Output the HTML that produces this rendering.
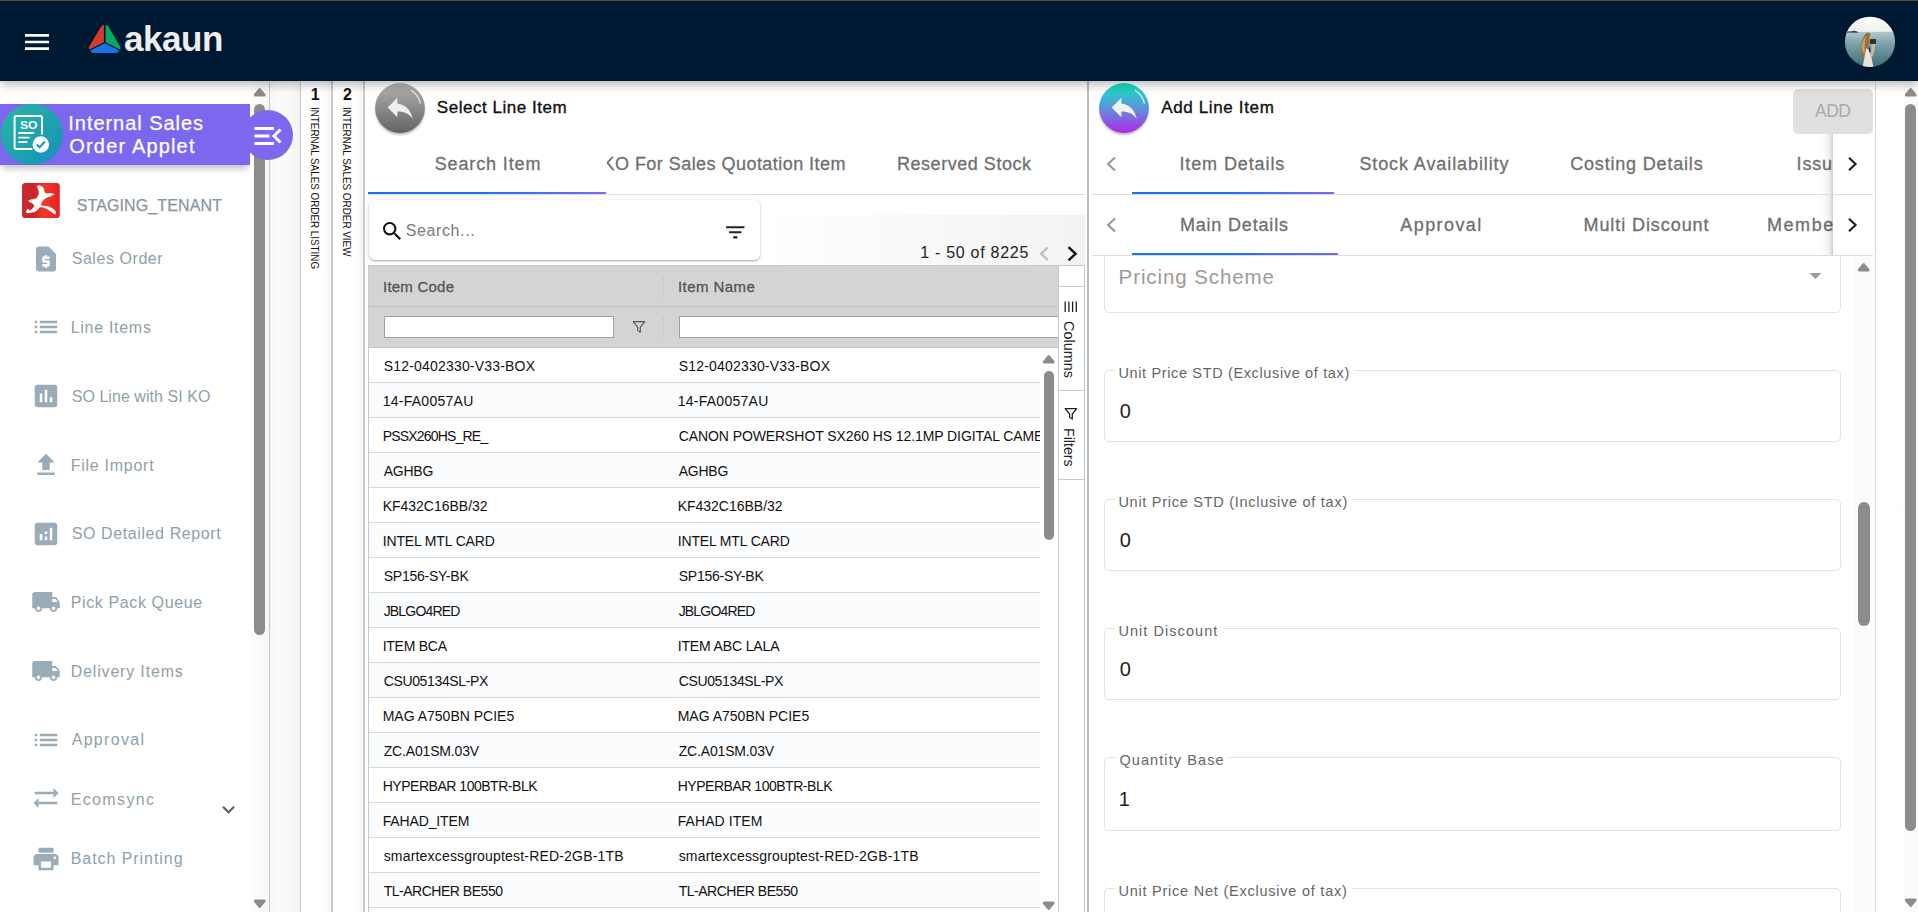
<!DOCTYPE html>
<html lang="en"><head><meta charset="utf-8"><title>Internal Sales Order Applet</title>
<style>
*{box-sizing:border-box;margin:0;padding:0}
html,body{width:1918px;height:912px;overflow:hidden;background:#fff}
body{font-family:"Liberation Sans",sans-serif;position:relative}
#app{position:absolute;left:0;top:0;width:1918px;height:912px;overflow:hidden;background:#fff}
.t{position:absolute;white-space:nowrap;display:block}
.b5{-webkit-text-stroke:.35px currentColor}
.hd{-webkit-text-stroke:.3px currentColor}
.tb{-webkit-text-stroke:.3px currentColor}
.st{-webkit-text-stroke:.25px currentColor}
.ic{position:absolute;display:block;overflow:visible}
.hdr{position:absolute;left:0;top:0;width:1918px;height:81px;background:#001933;box-shadow:0 3px 10px rgba(0,0,0,.3);z-index:20}
.topline{position:absolute;left:0;top:0;width:1918px;height:1px;background:#5e4a3e;z-index:21}
.side{position:absolute;left:0;top:0;width:269px;height:912px;background:#fff;z-index:2}
.applet{position:absolute;left:0;top:103.8px;width:250px;height:61.6px;background:#7b68ee;box-shadow:0 5px 7px -2px rgba(60,60,90,.35)}
.sb-track{position:absolute;background:linear-gradient(90deg,#fff,#f6f6f6)}
.sb-track2{position:absolute;left:1900px;top:81px;width:18px;height:831px;background:linear-gradient(90deg,#fff,#fbfbfb 40%)}
.sb-track3{position:absolute;left:1854px;top:256px;width:19.5px;height:656px;background:#fbfbfb}
.thumb{position:absolute;background:#8c8c8c;border-radius:6px}
.vline{position:absolute;top:81px;width:1px;height:831px;background:#c9c9c9;z-index:3}
.vline2{position:absolute;top:81px;width:1.5px;height:831px;background:#bdbdbd;z-index:3}
.collapse{position:absolute;left:243px;top:109.8px;width:50px;height:50px;border-radius:50%;background:#7b68ee;z-index:4}
.collapse + .ic{z-index:5}
.gap{position:absolute;left:270px;top:81px;width:30px;height:831px;background:linear-gradient(90deg,#f6f6f6 0%,#fbfbfb 30%,#f9f9f9 70%,#f1f1f1 100%)}
.colw{position:absolute;top:81px;width:31px;height:831px;background:linear-gradient(90deg,#fff 0%,#fff 70%,#f3f3f3 100%)}
.vtxt{position:absolute;white-space:nowrap;transform-origin:0 0;color:#111;font-size:11.6px;line-height:11.6px;z-index:3}
.mid{position:absolute;left:0;top:0;width:0;height:0}
.clip{position:absolute;overflow:hidden}
.hline{position:absolute;height:1px;background:#dedede}
.ink{position:absolute;height:2px;background:linear-gradient(90deg,#1a73e8 0%,#1a73e8 45%,#7b68ee 100%)}
.scard{position:absolute;left:369px;top:200px;width:391px;height:59.5px;background:#fff;border-radius:6px;box-shadow:0 1px 3px rgba(0,0,0,.26),0 1px 1px rgba(0,0,0,.12)}
.pgbar{position:absolute;left:760px;top:215px;width:325px;height:51px;background:linear-gradient(90deg,#fff 0%,#fbfbfb 30%,#f3f3f3 100%)}
.grid{position:absolute;left:368px;top:265px;width:690px;height:647px;border-left:1px solid #c5cacd;border-top:1px solid #c5cacd;overflow:hidden}
.ghead{position:absolute;left:0;top:0;width:690px;height:82px;background:#d4d4d4}
.gline{position:absolute;left:0;width:690px;height:1px;background:#bcc3c7}
.gsep{position:absolute;width:1px;background:#c3c9cc}
.finput{position:absolute;height:22px;background:#fff;border:1px solid #95a5a6}
.rows{position:absolute;left:369px;top:348px;width:671px;height:564px;overflow:hidden;font-size:14.6px;color:#111}
.row{position:absolute;left:0;width:671px;height:35px;border-bottom:1px solid #d6dadc;background:#fff}
.row.alt{background:#fbfcfe}
.gsb{position:absolute;left:1040px;top:348px;width:18px;height:564px;background:#fff}
.gside{position:absolute;left:1058px;top:265px;width:27px;height:647px;background:#fff;border:1px solid #c5cacd;border-bottom:0}
.gsl{position:absolute;left:0;width:25px;height:1px;background:#c5cacd}
.vtxt.g{font-size:15px;line-height:15px;color:#222}
.rp{position:absolute;left:0;top:0;width:0;height:0}
.addbtn{position:absolute;left:1793px;top:88.9px;width:80px;height:45px;background:#e0e0e0;border-radius:5px}
.tabsh{position:absolute;left:1833px;width:41px;height:60px;background:#fff}
.tabsh:before{content:'';position:absolute;left:-12px;top:0;width:12px;height:100%;background:linear-gradient(90deg,rgba(0,0,0,0),rgba(0,0,0,.03) 45%,rgba(0,0,0,.08) 75%,rgba(0,0,0,.2))}
.form{position:absolute;left:1092px;top:256px;width:782px;height:656px;overflow:hidden}
.fld{position:absolute;left:12px;width:737px;border:1px solid #e3e3e3;border-radius:5px;background:#fff}
.lbg{position:absolute;height:6px;background:#fff}
</style></head>
<body><div id="app">
<header class="hdr">
<svg class="ic" style="left:21.2px;top:26px" width="32" height="32" viewBox="0 0 24 24" fill="#fff" ><path d="M3 18h18v-2H3v2zm0-5h18v-2H3v2zm0-7v2h18V6H3z"/></svg>
<svg class="ic" style="left:86px;top:22px" width="38" height="34" viewBox="86 22 38 34">
<path d="M103.9 25.2 Q104.3 24.5 103.2 24.9 Q102 25.3 101.2 26.6 L89.2 46.6 Q88.3 48.2 89.3 49.4 L103.9 42.3 Z" fill="#d93a29"/>
<path d="M105.6 25.2 Q105.2 24.5 106.3 24.9 Q107.5 25.3 108.3 26.6 L120.1 46.6 Q121 48.2 120 49.4 L105.6 42.3 Z" fill="#06a964"/>
<path d="M104.75 43.3 L119.3 50.6 Q118.6 52.9 116.3 52.9 L93.2 52.9 Q90.9 52.9 90.2 50.6 Z" fill="#1a73e8"/>
</svg>
<span class="t" style="left:124.00px;top:21px;font-size:35px;line-height:35px;font-weight:700;letter-spacing:-0.444px;color:#eeeeee;">akaun</span>
<svg class="ic" style="left:1844px;top:16px" width="52" height="52" viewBox="1844 16 52 52">
<defs><clipPath id="av"><circle cx="1870" cy="41.8" r="25.1"/></clipPath>
<linearGradient id="sea" x1="0" y1="0" x2="0" y2="1"><stop offset="0" stop-color="#b3c7cd"/><stop offset="0.3" stop-color="#7fa3ab"/><stop offset="1" stop-color="#376a73"/></linearGradient>
<linearGradient id="sky" x1="0" y1="0" x2="0" y2="1"><stop offset="0" stop-color="#ffffff"/><stop offset="1" stop-color="#eef0ec"/></linearGradient>
<filter id="bl" x="-10%" y="-10%" width="120%" height="120%"><feGaussianBlur stdDeviation=".45"/></filter></defs>
<g clip-path="url(#av)"><rect x="1844" y="16" width="52" height="16.2" fill="url(#sky)"/><rect x="1844" y="31.8" width="52" height="37" fill="url(#sea)"/>
<g filter="url(#bl)">
<path d="M1846.5 32.6 Q1848.5 30.6 1850.5 31.6 Q1854 29.8 1857.6 31.8 L1858.2 32.7 Z" fill="#2e4a45"/>
<path d="M1866.2 33 Q1870.2 31.6 1870.8 35.4 L1869.4 41.5 Q1868.2 48 1867.2 54.5 L1864 58.5 Q1859.2 54 1860.8 46 Q1862 38 1866.2 33Z" fill="#94733f"/>
<path d="M1861.5 46 Q1863 40 1865.5 36 Q1864.5 44 1864.5 54 Q1862 52 1861.5 46Z" fill="#c9a56e"/>
<path d="M1869.7 35.6 L1871.6 36.6 L1871.2 41 L1869.2 42.2Z" fill="#d7b196"/>
<path d="M1866.3 48 Q1869.3 50 1871.2 56 L1873.6 68 L1862.5 68 Q1864.2 58 1866.3 48Z" fill="#e7e4e1"/>
<path d="M1871.6 44.2 L1875.2 43.4 L1874.6 50 L1872.6 56.5 L1870.6 56.5 L1871.4 49Z" fill="#d6b49b"/>
<rect x="1869.8" y="39" width="6.2" height="4.9" rx="1.1" fill="#25353b"/>
<path d="M1868.6 47 L1870.2 47.4 L1870.6 52 L1869.4 52.6Z" fill="#2d3a3c"/>
</g></g></svg>
</header>
<div class="topline"></div>
<aside class="side">
<div class="applet"></div>
<svg class="ic" style="left:0px;top:103px" width="64" height="64" viewBox="0 103 64 64">
<defs><linearGradient id="teal" x1="0" y1="0" x2="1" y2="1"><stop offset="0" stop-color="#27b8a4"/><stop offset="1" stop-color="#168fb8"/></linearGradient></defs>
<ellipse cx="31.9" cy="134.5" rx="31.1" ry="30.3" fill="url(#teal)"/>
<path d="M31.5 149 H16 Q14.6 149 14.6 147.6 V117.4 Q14.6 116 16 116 H40.6 Q42 116 42 117.4 V133.8" fill="none" stroke="#fff" stroke-width="2" stroke-linecap="round" stroke-linejoin="round"/>
<text x="20" y="129" font-family="'Liberation Sans',sans-serif" font-weight="700" font-size="11.5" fill="#fff" textLength="17.5" lengthAdjust="spacingAndGlyphs">SO</text>
<path d="M19 133 H33.4 M19 137.6 H28.8 M19 142 H26.5" stroke="#fff" stroke-width="1.9" stroke-linecap="round" fill="none"/>
<circle cx="40.8" cy="144.5" r="8.25" fill="#fff"/>
<path d="M36.8 144.4 L39.6 147.2 L45 141.6" fill="none" stroke="#1c9cb3" stroke-width="2.1"/>
</svg>
<span class="t st" style="left:68.30px;top:113px;font-size:20px;line-height:20px;letter-spacing:0.954px;color:#fff;">Internal Sales</span>
<span class="t st" style="left:69.30px;top:136px;font-size:20px;line-height:20px;letter-spacing:1.170px;color:#fff;">Order Applet</span>
<svg class="ic" style="left:22.1px;top:182.9px" width="38" height="35.2" viewBox="0 0 38 35.2">
<defs><linearGradient id="red" x1="0" y1="0" x2="1" y2="0"><stop offset="0" stop-color="#cb2a31"/><stop offset="0.3" stop-color="#cc232a"/><stop offset="0.58" stop-color="#ee3b27"/><stop offset="1" stop-color="#e52023"/></linearGradient></defs>
<rect x="0" y="0" width="37.8" height="35.1" rx="3.4" fill="url(#red)"/>
<path d="M15.2 3.3 L16.9 2.5 L19.6 3.6 L21.3 4.9 L21.8 6.9 L22.4 9.6 L24.6 10.7 L28.9 10.4 L32.2 11.2 L28.9 12.9 L24.6 14.5 L21.3 16.7 L19.6 18.9 L18.6 22.0 L19.8 22.9 L22.4 23.2 L26.8 23.8 L31.1 26.0 L33.3 28.2 L33.6 31.0 L31.7 30.4 L28.9 28.2 L24.6 25.5 L20.2 23.9 L17.6 24.0 L15.8 26.6 L12.5 28.8 L8.1 29.6 L4.8 29.9 L4.3 28.8 L5.6 26.0 L6.7 27.1 L8.1 27.7 L10.9 25.5 L12.5 22.8 L12.0 21.7 L10.3 20.0 L7.6 18.9 L6.7 17.8 L9.2 16.7 L12.5 16.2 L15.2 15.1 L16.9 11.8 L17.2 8.5 L16.3 5.8 Z" fill="#fff" stroke="#fff" stroke-width=".6" stroke-linejoin="round"/>
</svg>
<span class="t st" style="left:76.70px;top:198px;font-size:16px;line-height:16px;letter-spacing:0.120px;color:#8a959d;">STAGING_TENANT</span>
<svg class="ic" style="left:31px;top:244px" width="30" height="30" viewBox="0 0 24 24" fill="#99acb8" ><path d="M14 2H6c-1.1 0-2 .9-2 2v16c0 1.1.9 2 2 2h12c1.1 0 2-.9 2-2V8l-6-6zm1 10h-4v1h3c.55 0 1 .45 1 1v3c0 .55-.45 1-1 1h-1v1h-2v-1H9v-2h4v-1h-3c-.55 0-1-.45-1-1v-3c0-.55.45-1 1-1h1V9h2v1h2v2z"/></svg>
<span class="t" style="left:71.70px;top:251px;font-size:16px;line-height:16px;letter-spacing:0.556px;color:#909fa9;">Sales Order</span>
<svg class="ic" style="left:31px;top:312px" width="30" height="30" viewBox="0 0 24 24" fill="#99acb8" ><path d="M3 13h2v-2H3v2zm0 4h2v-2H3v2zm0-8h2V7H3v2zm4 4h14v-2H7v2zm0 4h14v-2H7v2zM7 7v2h14V7H7z"/></svg>
<span class="t" style="left:70.70px;top:320px;font-size:16px;line-height:16px;letter-spacing:0.710px;color:#909fa9;">Line Items</span>
<svg class="ic" style="left:31px;top:381px" width="30" height="30" viewBox="0 0 24 24" fill="#99acb8" ><path d="M19 3H5c-1.1 0-2 .9-2 2v14c0 1.1.9 2 2 2h14c1.1 0 2-.9 2-2V5c0-1.1-.9-2-2-2zM9 17H7v-7h2v7zm4 0h-2V7h2v10zm4 0h-2v-4h2v4z"/></svg>
<span class="t" style="left:71.70px;top:389px;font-size:16px;line-height:16px;letter-spacing:0.048px;color:#909fa9;">SO Line with SI KO</span>
<svg class="ic" style="left:31px;top:450px" width="30" height="30" viewBox="0 0 24 24" fill="#99acb8" ><path d="M9 16h6v-6h4l-7-7-7 7h4zm-4 2h14v2H5z"/></svg>
<span class="t" style="left:70.70px;top:458px;font-size:16px;line-height:16px;letter-spacing:0.737px;color:#909fa9;">File Import</span>
<svg class="ic" style="left:31px;top:519px" width="30" height="30" viewBox="0 0 24 24" fill="#99acb8" ><path d="M19 3H5c-1.1 0-2 .9-2 2v14c0 1.1.9 2 2 2h14c1.1 0 2-.9 2-2V5c0-1.1-.9-2-2-2zM9 17H7v-5h2v5zm4 0h-2v-3h2v3zm0-5h-2v-2h2v2zm4 5h-2V7h2v10z"/></svg>
<span class="t" style="left:71.70px;top:526px;font-size:16px;line-height:16px;letter-spacing:0.607px;color:#909fa9;">SO Detailed Report</span>
<svg class="ic" style="left:31px;top:587px" width="30" height="30" viewBox="0 0 24 24" fill="#99acb8" ><path d="M20 8h-3V4H3c-1.1 0-2 .9-2 2v11h2c0 1.66 1.34 3 3 3s3-1.34 3-3h6c0 1.66 1.34 3 3 3s3-1.34 3-3h2v-5l-3-4zM6 18.5c-.83 0-1.5-.67-1.5-1.5s.67-1.5 1.5-1.5 1.5.67 1.5 1.5-.67 1.5-1.5 1.5zm13.5-9l1.96 2.5H17V9.5h2.5zm-1.5 9c-.83 0-1.5-.67-1.5-1.5s.67-1.5 1.5-1.5 1.5.67 1.5 1.5-.67 1.5-1.5 1.5z"/></svg>
<span class="t" style="left:70.70px;top:595px;font-size:16px;line-height:16px;letter-spacing:0.619px;color:#909fa9;">Pick Pack Queue</span>
<svg class="ic" style="left:31px;top:656px" width="30" height="30" viewBox="0 0 24 24" fill="#99acb8" ><path d="M20 8h-3V4H3c-1.1 0-2 .9-2 2v11h2c0 1.66 1.34 3 3 3s3-1.34 3-3h6c0 1.66 1.34 3 3 3s3-1.34 3-3h2v-5l-3-4zM6 18.5c-.83 0-1.5-.67-1.5-1.5s.67-1.5 1.5-1.5 1.5.67 1.5 1.5-.67 1.5-1.5 1.5zm13.5-9l1.96 2.5H17V9.5h2.5zm-1.5 9c-.83 0-1.5-.67-1.5-1.5s.67-1.5 1.5-1.5 1.5.67 1.5 1.5-.67 1.5-1.5 1.5z"/></svg>
<span class="t" style="left:70.70px;top:664px;font-size:16px;line-height:16px;letter-spacing:0.827px;color:#909fa9;">Delivery Items</span>
<svg class="ic" style="left:31px;top:725px" width="30" height="30" viewBox="0 0 24 24" fill="#99acb8" ><path d="M3 13h2v-2H3v2zm0 4h2v-2H3v2zm0-8h2V7H3v2zm4 4h14v-2H7v2zm0 4h14v-2H7v2zM7 7v2h14V7H7z"/></svg>
<span class="t" style="left:71.70px;top:732px;font-size:16px;line-height:16px;letter-spacing:1.301px;color:#909fa9;">Approval</span>
<svg class="ic" style="left:31px;top:783.3px" width="30" height="30" viewBox="0 0 24 24" fill="#99acb8" ><path d="M22 8l-4-4v3H3v2h15v3l4-4zM2 16l4 4v-3h15v-2H6v-3l-4 4z"/></svg>
<span class="t" style="left:70.70px;top:792px;font-size:16px;line-height:16px;letter-spacing:1.358px;color:#909fa9;">Ecomsync</span>
<svg class="ic" style="left:31px;top:844px" width="30" height="30" viewBox="0 0 24 24" fill="#99acb8" ><path d="M19 8H5c-1.66 0-3 1.34-3 3v6h4v4h12v-4h4v-6c0-1.66-1.34-3-3-3zm-3 11H8v-5h8v5zm3-7c-.55 0-1-.45-1-1s.45-1 1-1 1 .45 1 1-.45 1-1 1zm-1-9H6v4h12V3z"/></svg>
<span class="t" style="left:70.70px;top:851px;font-size:16px;line-height:16px;letter-spacing:0.945px;color:#909fa9;">Batch Printing</span>
<svg class="ic" style="left:216.2px;top:797.4px" width="25" height="25" viewBox="0 0 24 24" fill="#5e5e5e" ><path d="M16.59 8.59L12 13.17 7.41 8.59 6 10l6 6 6-6z"/></svg>
<div class="sb-track" style="left:250px;top:81px;width:19px;height:831px"></div>
<svg class="ic" style="left:252.9px;top:87.3px" width="13.4" height="10" viewBox="0 0 13.4 10"><path d="M6.7 2.7 L11.1 8 L2.3 8 Z" fill="#8c8c8c" stroke="#8c8c8c" stroke-width="3" stroke-linejoin="round"/></svg>
<div class="thumb" style="left:254px;top:104px;width:11px;height:531px"></div>
<svg class="ic" style="left:252.9px;top:898.5px" width="13.4" height="10" viewBox="0 0 13.4 10"><path d="M6.7 7.3 L11.1 2 L2.3 2 Z" fill="#8c8c8c" stroke="#8c8c8c" stroke-width="3" stroke-linejoin="round"/></svg>
</aside>
<div class="vline" style="left:269px"></div>
<div class="collapse"></div>
<svg class="ic" style="left:249.6px;top:117.6px" width="36" height="36" viewBox="0 0 24 24" fill="#fff" ><path d="M3 18h13v-2H3v2zm0-5h10v-2H3v2zm0-7v2h13V6H3zm18 9.59L17.42 12 21 8.41 19.59 7l-5 5 5 5L21 15.59z"/></svg>
<div class="gap"></div>
<div class="vline" style="left:300px"></div><div class="vline" style="left:331.2px;width:1.7px;background:#cbcbcb"></div><div class="vline" style="left:363.2px;width:1.7px;background:#cbcbcb"></div>
<div class="colw" style="left:301px"></div><div class="colw" style="left:333px"></div>
<span class="t" style="left:310.80px;top:87px;font-size:16px;line-height:16px;font-weight:700;color:#111;">1</span>
<span class="t" style="left:343.10px;top:87px;font-size:16px;line-height:16px;font-weight:700;color:#111;">2</span>
<div class="vtxt" style="left:321px;top:107.4px;"><span style="display:inline-block;transform-origin:0 0;transform:rotate(90deg) scaleX(0.8491)">INTERNAL SALES ORDER LISTING</span></div>
<div class="vtxt" style="left:353.2px;top:107.4px;"><span style="display:inline-block;transform-origin:0 0;transform:rotate(90deg) scaleX(0.8523)">INTERNAL SALES ORDER VIEW</span></div>
<section class="mid">
<svg class="ic" style="left:370px;top:79px" width="60" height="62" viewBox="370 79 60 62">
<defs><linearGradient id="gry" x1="0" y1="0" x2="0" y2="1"><stop offset="0" stop-color="#b2b2b2"/><stop offset="1" stop-color="#636363"/></linearGradient>
<filter id="sh" x="-20%" y="-20%" width="140%" height="150%"><feGaussianBlur stdDeviation="1.6"/></filter></defs>
<circle cx="400" cy="110.5" r="24" fill="#000" opacity=".35" filter="url(#sh)"/>
<circle cx="400" cy="108" r="24.9" fill="url(#gry)"/>
<path d="M411.5 90.5 Q418.5 95.5 420.3 103" fill="none" stroke="#fff" stroke-opacity=".7" stroke-width="1.3" stroke-linecap="round"/>
<g transform="translate(383.5,90.9) scale(1.39)"><path d="M10 9V5l-7 7 7 7v-4.1c5 0 8.5 1.6 11 5.1-1-5-4-10-11-11z" fill="#eee"/></g>
</svg>
<span class="t b5" style="left:436.80px;top:99px;font-size:17px;line-height:17px;letter-spacing:0.538px;color:#111;">Select Line Item</span>
<span class="t tb" style="left:434.70px;top:155px;font-size:18px;line-height:18px;letter-spacing:0.865px;color:#6f6f6f;">Search Item</span>
<div class="clip" style="left:607px;top:145px;width:239px;height:40px">
<span class="t tb" style="left:-27.83px;top:10px;font-size:18px;line-height:18px;letter-spacing:0.455px;color:#6f6f6f;">SI KO For Sales Quotation Item</span>
</div>
<span class="t tb" style="left:897.00px;top:155px;font-size:18px;line-height:18px;letter-spacing:0.534px;color:#6f6f6f;">Reserved Stock</span>
<div class="hline" style="left:368px;top:194px;width:717px"></div>
<div class="ink" style="left:368px;top:192px;width:238px"></div>
<div class="pgbar"></div>
<div class="scard"></div>
<svg class="ic" style="left:380px;top:219px" width="24.6" height="24.6" viewBox="0 0 24 24" fill="#111" ><path d="M15.5 14h-.79l-.28-.27C15.41 12.59 16 11.11 16 9.5 16 5.91 13.09 3 9.5 3S3 5.91 3 9.5 5.91 16 9.5 16c1.61 0 3.09-.59 4.23-1.57l.27.28v.79l5 4.99L20.49 19l-4.99-5zm-6 0C7.01 14 5 11.99 5 9.5S7.01 5 9.5 5 14 7.01 14 9.5 11.99 14 9.5 14z"/></svg>
<span class="t" style="left:405.80px;top:223px;font-size:16px;line-height:16px;letter-spacing:0.602px;color:#7a7a7a;">Search...</span>
<svg class="ic" style="left:722.8px;top:219.6px" width="24.5" height="24.5" viewBox="0 0 24 24" fill="#222" ><path d="M10 18h4v-2h-4v2zM3 6v2h18V6H3zm3 7h12v-2H6v2z"/></svg>
<span class="t" style="left:920.20px;top:245px;font-size:16px;line-height:16px;letter-spacing:0.720px;color:#222;">1 - 50 of 8225</span>
<svg class="ic" style="left:1036px;top:244px" width="46" height="20" viewBox="1036 244 46 20"><path d="M1047.8 247.5 L1041 253.8 L1047.8 260" fill="none" stroke="#bdbdbd" stroke-width="2.3"/><path d="M1068.5 247.2 L1075.6 253.8 L1068.5 260.4" fill="none" stroke="#111" stroke-width="2.4"/></svg>
<div class="grid">
<div class="ghead"></div>
<div class="gline" style="top:40px"></div><div class="gline" style="top:81px"></div>
<div class="gsep" style="left:294px;top:10px;height:21px"></div><div class="gsep" style="left:294px;top:51px;height:20px"></div>
<div class="finput" style="left:15px;top:50px;width:230px"></div>
<div class="finput" style="left:310px;top:50px;width:400px"></div>
<svg class="ic" style="left:262px;top:53px" width="16" height="16" viewBox="0 0 16 16"><path d="M2.2 2.6 H13.8 L9.3 8.2 V13.2 L6.7 11.4 V8.2 Z" fill="none" stroke="#555" stroke-width="1.1" stroke-linejoin="round"/></svg>
</div>
<span class="t hd" style="left:383.00px;top:279px;font-size:15px;line-height:15px;letter-spacing:0.230px;color:#555;">Item Code</span>
<span class="t hd" style="left:678.00px;top:279px;font-size:15px;line-height:15px;letter-spacing:0.436px;color:#555;">Item Name</span>
<div class="rows">
<div class="row" style="top:0px">
<span class="t" style="left:14.70px;top:11px;font-size:14px;line-height:14px;letter-spacing:0.192px;color:#111;">S12-0402330-V33-BOX</span>
<span class="t" style="left:309.70px;top:11px;font-size:14px;line-height:14px;letter-spacing:0.192px;color:#111;">S12-0402330-V33-BOX</span>
</div>
<div class="row alt" style="top:35px">
<span class="t" style="left:13.70px;top:11px;font-size:14px;line-height:14px;letter-spacing:0.267px;color:#111;">14-FA0057AU</span>
<span class="t" style="left:308.70px;top:11px;font-size:14px;line-height:14px;letter-spacing:0.267px;color:#111;">14-FA0057AU</span>
</div>
<div class="row" style="top:70px">
<span class="t" style="left:13.70px;top:11px;font-size:14px;line-height:14px;letter-spacing:-0.808px;color:#111;">PSSX260HS_RE_</span>
<span class="t" style="left:309.70px;top:11px;font-size:14px;line-height:14px;letter-spacing:-0.083px;color:#111;">CANON POWERSHOT SX260 HS 12.1MP DIGITAL CAMERA</span>
</div>
<div class="row alt" style="top:105px">
<span class="t" style="left:14.70px;top:11px;font-size:14px;line-height:14px;letter-spacing:-0.244px;color:#111;">AGHBG</span>
<span class="t" style="left:309.70px;top:11px;font-size:14px;line-height:14px;letter-spacing:-0.244px;color:#111;">AGHBG</span>
</div>
<div class="row" style="top:140px">
<span class="t" style="left:13.70px;top:11px;font-size:14px;line-height:14px;letter-spacing:-0.015px;color:#111;">KF432C16BB/32</span>
<span class="t" style="left:308.70px;top:11px;font-size:14px;line-height:14px;letter-spacing:-0.015px;color:#111;">KF432C16BB/32</span>
</div>
<div class="row alt" style="top:175px">
<span class="t" style="left:13.70px;top:11px;font-size:14px;line-height:14px;letter-spacing:-0.147px;color:#111;">INTEL MTL CARD</span>
<span class="t" style="left:308.70px;top:11px;font-size:14px;line-height:14px;letter-spacing:-0.147px;color:#111;">INTEL MTL CARD</span>
</div>
<div class="row" style="top:210px">
<span class="t" style="left:14.70px;top:11px;font-size:14px;line-height:14px;letter-spacing:-0.239px;color:#111;">SP156-SY-BK</span>
<span class="t" style="left:309.70px;top:11px;font-size:14px;line-height:14px;letter-spacing:-0.239px;color:#111;">SP156-SY-BK</span>
</div>
<div class="row alt" style="top:245px">
<span class="t" style="left:14.70px;top:11px;font-size:14px;line-height:14px;letter-spacing:-0.830px;color:#111;">JBLGO4RED</span>
<span class="t" style="left:309.70px;top:11px;font-size:14px;line-height:14px;letter-spacing:-0.830px;color:#111;">JBLGO4RED</span>
</div>
<div class="row" style="top:280px">
<span class="t" style="left:13.70px;top:11px;font-size:14px;line-height:14px;letter-spacing:-0.254px;color:#111;">ITEM BCA</span>
<span class="t" style="left:308.70px;top:11px;font-size:14px;line-height:14px;letter-spacing:-0.135px;color:#111;">ITEM ABC LALA</span>
</div>
<div class="row alt" style="top:315px">
<span class="t" style="left:14.70px;top:11px;font-size:14px;line-height:14px;letter-spacing:-0.359px;color:#111;">CSU05134SL-PX</span>
<span class="t" style="left:309.70px;top:11px;font-size:14px;line-height:14px;letter-spacing:-0.359px;color:#111;">CSU05134SL-PX</span>
</div>
<div class="row" style="top:350px">
<span class="t" style="left:13.70px;top:11px;font-size:14px;line-height:14px;color:#111;">MAG A750BN PCIE5</span>
<span class="t" style="left:308.70px;top:11px;font-size:14px;line-height:14px;color:#111;">MAG A750BN PCIE5</span>
</div>
<div class="row alt" style="top:385px">
<span class="t" style="left:14.70px;top:11px;font-size:14px;line-height:14px;letter-spacing:-0.166px;color:#111;">ZC.A01SM.03V</span>
<span class="t" style="left:309.70px;top:11px;font-size:14px;line-height:14px;letter-spacing:-0.166px;color:#111;">ZC.A01SM.03V</span>
</div>
<div class="row" style="top:420px">
<span class="t" style="left:13.70px;top:11px;font-size:14px;line-height:14px;letter-spacing:-0.475px;color:#111;">HYPERBAR 100BTR-BLK</span>
<span class="t" style="left:308.70px;top:11px;font-size:14px;line-height:14px;letter-spacing:-0.475px;color:#111;">HYPERBAR 100BTR-BLK</span>
</div>
<div class="row alt" style="top:455px">
<span class="t" style="left:13.70px;top:11px;font-size:14px;line-height:14px;letter-spacing:-0.138px;color:#111;">FAHAD_ITEM</span>
<span class="t" style="left:308.70px;top:11px;font-size:14px;line-height:14px;letter-spacing:0.084px;color:#111;">FAHAD ITEM</span>
</div>
<div class="row" style="top:490px">
<span class="t" style="left:14.70px;top:11px;font-size:14px;line-height:14px;letter-spacing:0.183px;color:#111;">smartexcessgrouptest-RED-2GB-1TB</span>
<span class="t" style="left:309.70px;top:11px;font-size:14px;line-height:14px;letter-spacing:0.183px;color:#111;">smartexcessgrouptest-RED-2GB-1TB</span>
</div>
<div class="row alt" style="top:525px">
<span class="t" style="left:14.70px;top:11px;font-size:14px;line-height:14px;letter-spacing:-0.482px;color:#111;">TL-ARCHER BE550</span>
<span class="t" style="left:309.70px;top:11px;font-size:14px;line-height:14px;letter-spacing:-0.482px;color:#111;">TL-ARCHER BE550</span>
</div>
<div class="row" style="top:560px">
</div>
</div>
<div class="gsb"></div>
<svg class="ic" style="left:1042.2px;top:354.0px" width="13.4" height="10" viewBox="0 0 13.4 10"><path d="M6.7 2.7 L11.1 8 L2.3 8 Z" fill="#8c8c8c" stroke="#8c8c8c" stroke-width="3" stroke-linejoin="round"/></svg>
<div class="thumb" style="left:1043.5px;top:371px;width:10.5px;height:169px"></div>
<svg class="ic" style="left:1042.2px;top:900.5px" width="13.4" height="10" viewBox="0 0 13.4 10"><path d="M6.7 7.3 L11.1 2 L2.3 2 Z" fill="#8c8c8c" stroke="#8c8c8c" stroke-width="3" stroke-linejoin="round"/></svg>
<div class="gside"><div class="gsl" style="top:20px"></div><div class="gsl" style="top:123.6px"></div><div class="gsl" style="top:213.4px"></div></div>
<svg class="ic" style="left:1063px;top:300px" width="16" height="14" viewBox="0 0 16 14"><path d="M2.2 1.5V12M5.9 1.5V12M9.6 1.5V12M13.3 1.5V12" stroke="#222" stroke-width="1.3" fill="none"/></svg>
<div class="vtxt g" style="left:1077.4px;top:321px;"><span style="display:inline-block;transform-origin:0 0;transform:rotate(90deg) scaleX(0.9610)">Columns</span></div>
<svg class="ic" style="left:1063px;top:406px" width="16" height="16" viewBox="0 0 16 16"><path d="M2.1 2.6 H13.7 L9.3 8 V13 L6.6 11.3 V8 Z" fill="none" stroke="#222" stroke-width="1.25" stroke-linejoin="round"/></svg>
<div class="vtxt g" style="left:1077.4px;top:427.7px;"><span style="display:inline-block;transform-origin:0 0;transform:rotate(90deg) scaleX(0.9458)">Filters</span></div>
</section>
<div class="vline2" style="left:1087.4px"></div>
<section class="rp">
<svg class="ic" style="left:1094px;top:79px" width="60" height="62" viewBox="1094 79 60 62">
<defs><linearGradient id="clr" x1="0" y1="0" x2="0" y2="1"><stop offset="0" stop-color="#16dfbe"/><stop offset="0.12" stop-color="#1fd5c4"/><stop offset="0.5" stop-color="#5b93dc"/><stop offset="1" stop-color="#b325ea"/></linearGradient></defs>
<circle cx="1124" cy="110.5" r="24" fill="#000" opacity=".35" filter="url(#sh)"/>
<circle cx="1124" cy="108" r="24.9" fill="url(#clr)"/>
<path d="M1135.5 90.5 Q1142.5 95.5 1144.3 103" fill="none" stroke="#fff" stroke-opacity=".8" stroke-width="1.3" stroke-linecap="round"/>
<g transform="translate(1107.5,90.9) scale(1.39)"><path d="M10 9V5l-7 7 7 7v-4.1c5 0 8.5 1.6 11 5.1-1-5-4-10-11-11z" fill="#f2f2f2"/></g>
</svg>
<span class="t b5" style="left:1161.20px;top:99px;font-size:17px;line-height:17px;letter-spacing:0.647px;color:#111;">Add Line Item</span>
<div class="addbtn"></div>
<span class="t" style="left:1815.00px;top:103px;font-size:17.5px;line-height:17.5px;letter-spacing:-0.505px;color:#a9a9a9;">ADD</span>
<div class="clip" style="left:1132px;top:145px;width:701px;height:40px">
<span class="t tb" style="left:47.40px;top:10px;font-size:18px;line-height:18px;letter-spacing:0.898px;color:#6f6f6f;">Item Details</span>
<span class="t tb" style="left:227.40px;top:10px;font-size:18px;line-height:18px;letter-spacing:0.904px;color:#6f6f6f;">Stock Availability</span>
<span class="t tb" style="left:438.20px;top:10px;font-size:18px;line-height:18px;letter-spacing:0.818px;color:#6f6f6f;">Costing Details</span>
<span class="t tb" style="left:664.60px;top:10px;font-size:18px;line-height:18px;letter-spacing:0.817px;color:#6f6f6f;">Issue Link</span>
</div>
<div class="hline" style="left:1092px;top:194px;width:781px"></div>
<div class="ink" style="left:1132px;top:192px;width:202px"></div>
<div class="clip" style="left:1132px;top:206px;width:701px;height:40px">
<span class="t tb" style="left:47.90px;top:10px;font-size:18px;line-height:18px;letter-spacing:0.824px;color:#6f6f6f;">Main Details</span>
<span class="t tb" style="left:268.30px;top:10px;font-size:18px;line-height:18px;letter-spacing:1.422px;color:#6f6f6f;">Approval</span>
<span class="t tb" style="left:451.50px;top:10px;font-size:18px;line-height:18px;letter-spacing:0.920px;color:#6f6f6f;">Multi Discount</span>
<span class="t tb" style="left:634.90px;top:10px;font-size:18px;line-height:18px;letter-spacing:1.598px;color:#6f6f6f;">Membership</span>
</div>
<div class="hline" style="left:1092px;top:255px;width:781px"></div>
<div class="ink" style="left:1132px;top:253px;width:206px"></div>
<div class="tabsh" style="top:134px"></div><div class="tabsh" style="top:195px"></div>
<svg class="ic" style="left:1100px;top:150px" width="24" height="100" viewBox="1100 150 24 100"><path d="M1115 157.5 L1108 164 L1115 170.5 M1115 218.5 L1108 225 L1115 231.5" fill="none" stroke="#8f8f8f" stroke-width="1.8"/></svg>
<svg class="ic" style="left:1840px;top:150px" width="24" height="100" viewBox="1840 150 24 100"><path d="M1849 157.8 L1855.6 164 L1849 170.2 M1849 218.8 L1855.6 225 L1849 231.2" fill="none" stroke="#1c1c1c" stroke-width="2.1"/></svg>
<div class="form">
<div class="fld" style="top:-20px;height:76.9px"></div>
<div class="fld" style="top:114.1px;height:71.8px"></div>
<div class="fld" style="top:243.1px;height:71.9px"></div>
<div class="fld" style="top:372.3px;height:72.2px"></div>
<div class="fld" style="top:501.1px;height:73.6px"></div>
<div class="fld" style="top:631.8px;height:72px"></div>
</div>
<span class="t" style="left:1118.60px;top:267px;font-size:20.5px;line-height:20.5px;letter-spacing:0.903px;color:#9b9b9b;">Pricing Scheme</span>
<svg class="ic" style="left:1800.5px;top:261px" width="28.8" height="28.8" viewBox="0 0 24 24" fill="#9a9a9a" ><path d="M7 10l5 5 5-5z"/></svg>
<div class="lbg" style="left:1114.5px;top:368.1px;width:239.4px"></div>
<span class="t" style="left:1118.40px;top:366px;font-size:14.5px;line-height:14.5px;letter-spacing:0.642px;color:#666;">Unit Price STD (Exclusive of tax)</span>
<span class="t" style="left:1119.80px;top:401px;font-size:20px;line-height:20px;color:#222;">0</span>
<div class="lbg" style="left:1114.5px;top:497.1px;width:237.4px"></div>
<span class="t" style="left:1118.40px;top:495px;font-size:14.5px;line-height:14.5px;letter-spacing:0.730px;color:#666;">Unit Price STD (Inclusive of tax)</span>
<span class="t" style="left:1119.80px;top:530px;font-size:20px;line-height:20px;color:#222;">0</span>
<div class="lbg" style="left:1114.5px;top:626.3px;width:108.3px"></div>
<span class="t" style="left:1118.40px;top:624px;font-size:14.5px;line-height:14.5px;letter-spacing:1.058px;color:#666;">Unit Discount</span>
<span class="t" style="left:1119.80px;top:659px;font-size:20px;line-height:20px;color:#222;">0</span>
<div class="lbg" style="left:1114.5px;top:755.1px;width:114.5px"></div>
<span class="t" style="left:1119.40px;top:753px;font-size:14.5px;line-height:14.5px;letter-spacing:1.091px;color:#666;">Quantity Base</span>
<span class="t" style="left:1118.80px;top:789px;font-size:20px;line-height:20px;color:#222;">1</span>
<div class="lbg" style="left:1114.5px;top:885.8px;width:237.0px"></div>
<span class="t" style="left:1118.40px;top:884px;font-size:14.5px;line-height:14.5px;letter-spacing:0.768px;color:#666;">Unit Price Net (Exclusive of tax)</span>
<div class="sb-track3"></div>
<svg class="ic" style="left:1856.8px;top:261.8px" width="13.4" height="10" viewBox="0 0 13.4 10"><path d="M6.7 2.7 L11.1 8 L2.3 8 Z" fill="#8c8c8c" stroke="#8c8c8c" stroke-width="3" stroke-linejoin="round"/></svg>
<div class="thumb" style="left:1858px;top:502px;width:11.5px;height:124px"></div>
</section>
<div class="vline" style="left:1875px;background:#d9d9d9"></div>
<div class="sb-track2"></div>
<svg class="ic" style="left:1903.8px;top:87.0px" width="13.4" height="10" viewBox="0 0 13.4 10"><path d="M6.7 2.7 L11.1 8 L2.3 8 Z" fill="#8c8c8c" stroke="#8c8c8c" stroke-width="3" stroke-linejoin="round"/></svg>
<div class="thumb" style="left:1905px;top:104px;width:11px;height:727px"></div>
<svg class="ic" style="left:1903.8px;top:898.4px" width="13.4" height="10" viewBox="0 0 13.4 10"><path d="M6.7 7.3 L11.1 2 L2.3 2 Z" fill="#8c8c8c" stroke="#8c8c8c" stroke-width="3" stroke-linejoin="round"/></svg>
</div></body></html>
